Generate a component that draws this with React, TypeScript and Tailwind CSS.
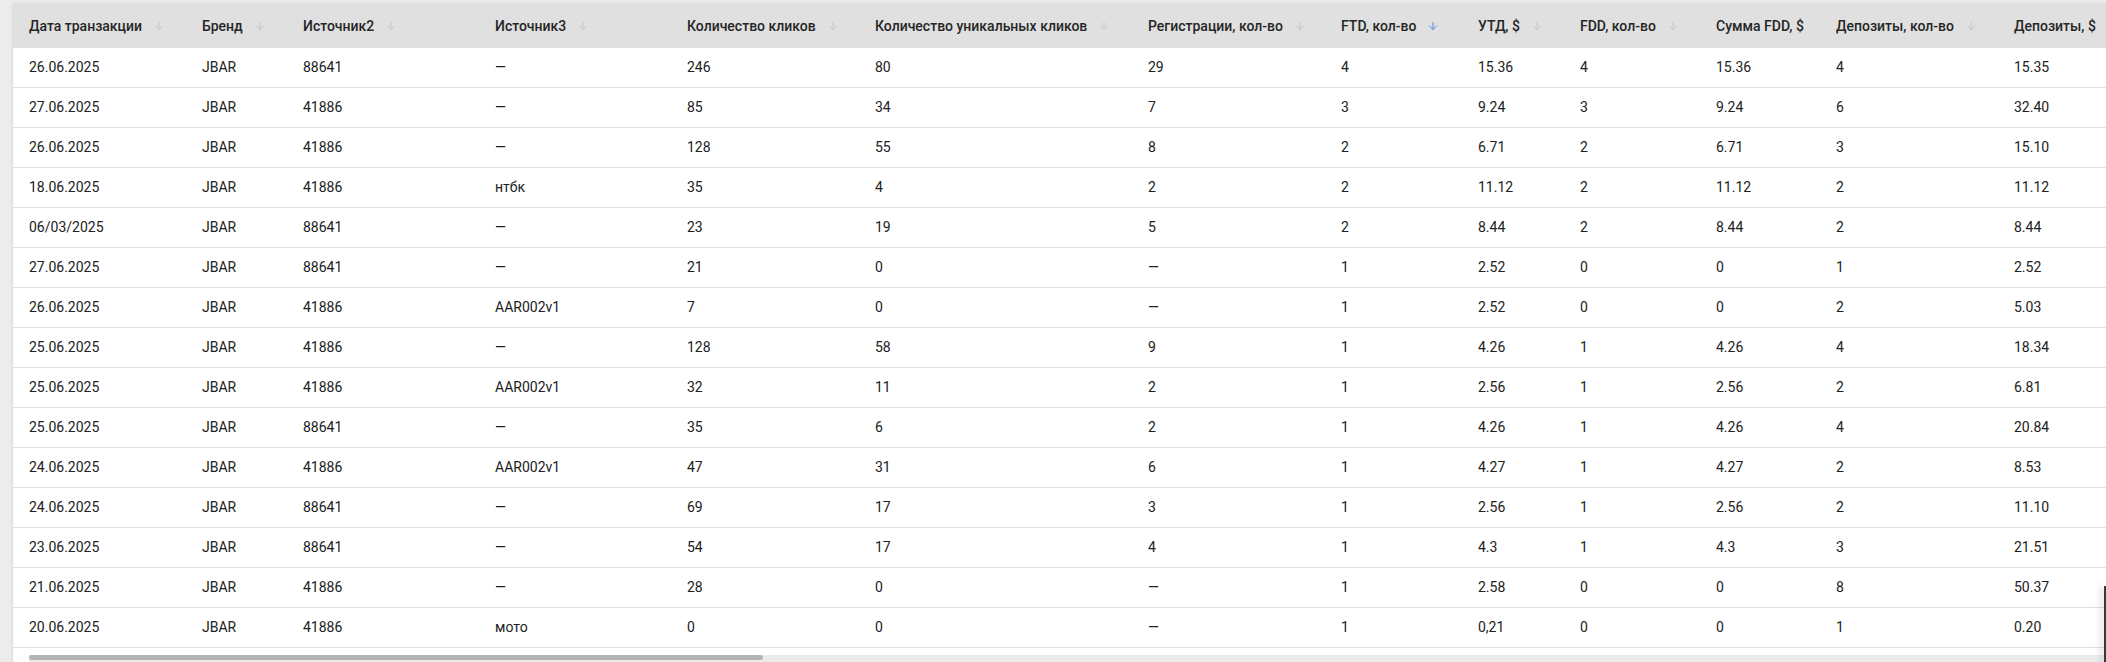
import { ArrowDown } from "lucide-react";

type Row = string[];

const columns: { title: string; sortable: boolean; active?: boolean }[] = [
  { title: "Дата транзакции", sortable: true },
  { title: "Бренд", sortable: true },
  { title: "Источник2", sortable: true },
  { title: "Источник3", sortable: true },
  { title: "Количество кликов", sortable: true },
  { title: "Количество уникальных кликов", sortable: true },
  { title: "Регистрации, кол-во", sortable: true },
  { title: "FTD, кол-во", sortable: true, active: true },
  { title: "УТД, $", sortable: true },
  { title: "FDD, кол-во", sortable: true },
  { title: "Сумма FDD, $", sortable: false },
  { title: "Депозиты, кол-во", sortable: true },
  { title: "Депозиты, $", sortable: true },
];

const rows: Row[] = [
  ["26.06.2025", "JBAR", "88641", "—", "246", "80", "29", "4", "15.36", "4", "15.36", "4", "15.35"],
  ["27.06.2025", "JBAR", "41886", "—", "85", "34", "7", "3", "9.24", "3", "9.24", "6", "32.40"],
  ["26.06.2025", "JBAR", "41886", "—", "128", "55", "8", "2", "6.71", "2", "6.71", "3", "15.10"],
  ["18.06.2025", "JBAR", "41886", "нтбк", "35", "4", "2", "2", "11.12", "2", "11.12", "2", "11.12"],
  ["06/03/2025", "JBAR", "88641", "—", "23", "19", "5", "2", "8.44", "2", "8.44", "2", "8.44"],
  ["27.06.2025", "JBAR", "88641", "—", "21", "0", "—", "1", "2.52", "0", "0", "1", "2.52"],
  ["26.06.2025", "JBAR", "41886", "AAR002v1", "7", "0", "—", "1", "2.52", "0", "0", "2", "5.03"],
  ["25.06.2025", "JBAR", "41886", "—", "128", "58", "9", "1", "4.26", "1", "4.26", "4", "18.34"],
  ["25.06.2025", "JBAR", "41886", "AAR002v1", "32", "11", "2", "1", "2.56", "1", "2.56", "2", "6.81"],
  ["25.06.2025", "JBAR", "88641", "—", "35", "6", "2", "1", "4.26", "1", "4.26", "4", "20.84"],
  ["24.06.2025", "JBAR", "41886", "AAR002v1", "47", "31", "6", "1", "4.27", "1", "4.27", "2", "8.53"],
  ["24.06.2025", "JBAR", "88641", "—", "69", "17", "3", "1", "2.56", "1", "2.56", "2", "11.10"],
  ["23.06.2025", "JBAR", "88641", "—", "54", "17", "4", "1", "4.3", "1", "4.3", "3", "21.51"],
  ["21.06.2025", "JBAR", "41886", "—", "28", "0", "—", "1", "2.58", "0", "0", "8", "50.37"],
  ["20.06.2025", "JBAR", "41886", "мото", "0", "0", "—", "1", "0,21", "0", "0", "1", "0.20"],
  ["17.06.2025", "JBAR", "41886", "—", "16", "0", "—", "1", "4.00", "0", "0", "1", "4.00"],
];

const gridCols =
  "grid grid-cols-[173px_101px_192px_192px_188px_273px_193px_137px_102px_136px_120px_178px_200px]";

export default function App() {
  return (
    <div className="relative h-[662px] w-[2106px] overflow-hidden bg-[#ececec] pl-[13px] pt-[4px] font-['Roboto',sans-serif] text-[14px] text-[#212121]">
      <div className="h-full w-[2200px] bg-white shadow-[0_0_3px_rgba(0,0,0,0.15)]">
        {/* HEADER */}
        <div className={`${gridCols} h-[44px] bg-[#e0e0e0] font-medium text-[#262626]`}>
          {columns.map((c) => (
            <div key={c.title} className="flex items-center whitespace-nowrap px-4">
              <span>{c.title}</span>
              {c.sortable && (
                <ArrowDown
                  size={12}
                  strokeWidth={2}
                  className={`ml-[11px] ${c.active ? "text-[#4a8fe6]" : "text-[#c4c4c4]"}`}
                />
              )}
            </div>
          ))}
        </div>

        {/* ROWS */}
        {rows.map((r, i) => (
          <div key={i} className={`${gridCols} h-[40px] border-b border-[#e0e0e0]`}>
            {r.map((v, j) => (
              <div key={j} className="flex items-center whitespace-nowrap px-4">
                {v}
              </div>
            ))}
          </div>
        ))}
      </div>

      {/* horizontal scrollbar */}
      <div className="absolute bottom-0 left-[29px] right-[2px] h-[7px] bg-[#ebebeb]">
        <div className="h-[5px] w-[734px] rounded-full bg-[#b4b4b4]" />
      </div>

      {/* drawer edge on the right */}
      <div className="absolute right-0 top-[586px] h-[76px] w-[2px] bg-[#3a3a3a] shadow-[-3px_0_6px_rgba(0,0,0,0.25)]" />
    </div>
  );
}
